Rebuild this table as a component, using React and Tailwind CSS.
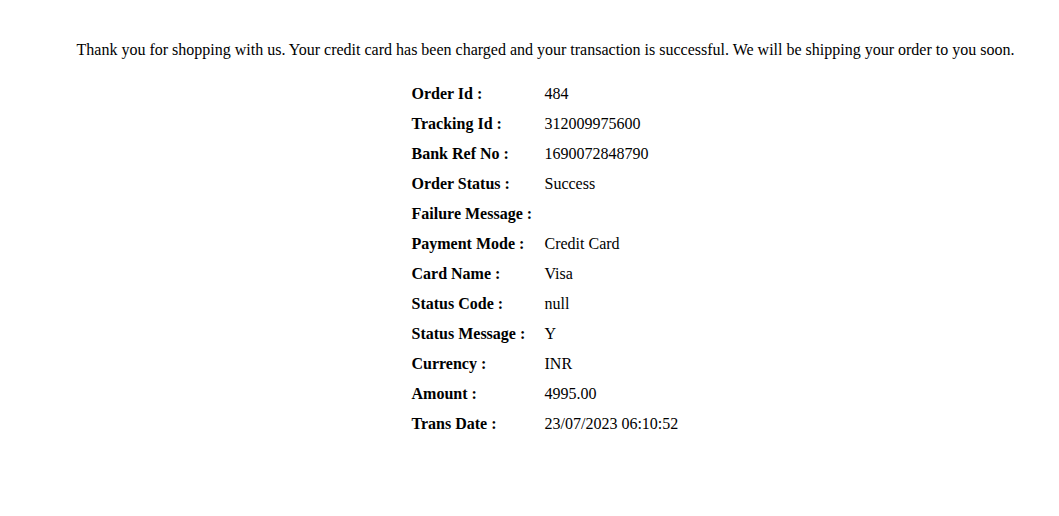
export default function App() {
  const rows = [
    ["Order Id :", "484"],
    ["Tracking Id :", "312009975600"],
    ["Bank Ref No :", "1690072848790"],
    ["Order Status :", "Success"],
    ["Failure Message :", ""],
    ["Payment Mode :", "Credit Card"],
    ["Card Name :", "Visa"],
    ["Status Code :", "null"],
    ["Status Message :", "Y"],
    ["Currency :", "INR"],
    ["Amount :", "4995.00"],
    ["Trans Date :", "23/07/2023 06:10:52"],
  ];
  return (
    <div className="min-h-[516px] w-full bg-white text-black text-[16px] leading-[19px] pt-[40px] pl-[32px]" style={{ fontFamily: '"Liberation Serif", "Times New Roman", serif' }}>
      <p className="text-center whitespace-nowrap">
        Thank you for shopping with us. Your credit card has been charged and your transaction is successful. We will be shipping your order to you soon.
      </p>
      <div className="flex justify-center mt-[19px] pr-[2px]">
        <div className="grid grid-cols-[133px_133px]">
          {rows.map(([k, v]) => (
            <div key={k} className="contents">
              <div className="font-bold h-[30px] flex items-center whitespace-nowrap">{k}</div>
              <div className="h-[30px] flex items-center whitespace-nowrap">{v}</div>
            </div>
          ))}
        </div>
      </div>
    </div>
  );
}
